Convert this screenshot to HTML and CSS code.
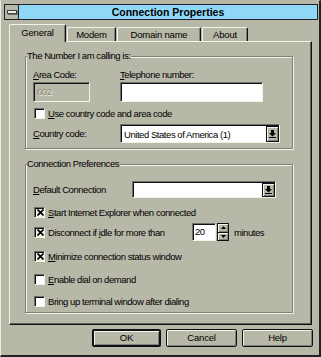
FILE: index.html
```html
<!DOCTYPE html>
<html>
<head>
<meta charset="utf-8">
<link rel="stylesheet" href="styles.css">
</head>
<body>
<div class="window">
  <div class="titlebar">
    <div class="sysmenu"><span class="sysbar"></span></div>
    <div class="caption">Connection Properties</div>
  </div>
  <div class="tabs">
    <div class="tab tab-general active">General</div>
    <div class="tab tab-modem">Modem</div>
    <div class="tab tab-domain">Domain name</div>
    <div class="tab tab-about">About</div>
  </div>
  <div class="panel">
    <div class="group group-number">
      <div class="group-title">The Number I am calling is:</div>
      <div class="fields">
        <div class="field field-area">
          <div class="label"><u>A</u>rea Code:</div>
          <div class="input input-area disabled">602</div>
        </div>
        <div class="field field-phone">
          <div class="label"><u>T</u>elephone number:</div>
          <div class="input input-phone"></div>
        </div>
      </div>
      <div class="check row-usecc"><span class="box"></span><span><u>U</u>se country code and area code</span></div>
      <div class="row row-country">
        <span class="row-label"><u>C</u>ountry code:</span>
        <div class="combo combo-country">
          <span class="combo-text">United States of America (1)</span>
          <span class="drop"><svg width="7" height="8" viewBox="0 0 7 8"><path d="M2 0h3v3h2L3.5 6.5 0 3h2z" fill="#000"/><rect x="0" y="7" width="7" height="1" fill="#000"/></svg></span>
        </div>
      </div>
    </div>
    <div class="group group-prefs">
      <div class="group-title">Connection Preferences</div>
      <div class="row row-default">
        <span class="row-label row-label-wide"><u>D</u>efault Connection</span>
        <div class="combo combo-default">
          <span class="combo-text"></span>
          <span class="drop"><svg width="7" height="8" viewBox="0 0 7 8"><path d="M2 0h3v3h2L3.5 6.5 0 3h2z" fill="#000"/><rect x="0" y="7" width="7" height="1" fill="#000"/></svg></span>
        </div>
      </div>
      <div class="check row-p1"><span class="box checked"><svg width="7" height="7" viewBox="0 0 7 7"><path d="M0.5 0.5L6.5 6.5M6.5 0.5L0.5 6.5" stroke="#000" stroke-width="1.6"/></svg></span><span><u>S</u>tart Internet Explorer when connected</span></div>
      <div class="check row-p2">
        <span class="box checked"><svg width="7" height="7" viewBox="0 0 7 7"><path d="M0.5 0.5L6.5 6.5M6.5 0.5L0.5 6.5" stroke="#000" stroke-width="1.6"/></svg></span>
        <span class="spin-label">Disconnect if <u>i</u>dle for more than</span>
        <span class="input spin-input">20</span>
        <span class="spinner">
          <span class="spin-btn"><svg width="5" height="3" viewBox="0 0 5 3"><path d="M0 3L2.5 0 5 3z" fill="#000"/></svg></span>
          <span class="spin-btn"><svg width="5" height="3" viewBox="0 0 5 3"><path d="M0 0L2.5 3 5 0z" fill="#000"/></svg></span>
        </span>
        <span class="minutes">minutes</span>
      </div>
      <div class="check row-p3"><span class="box checked"><svg width="7" height="7" viewBox="0 0 7 7"><path d="M0.5 0.5L6.5 6.5M6.5 0.5L0.5 6.5" stroke="#000" stroke-width="1.6"/></svg></span><span><u>M</u>inimize connection status window</span></div>
      <div class="check row-p4"><span class="box"></span><span><u>E</u>nable dial on demand</span></div>
      <div class="check row-p5"><span class="box"></span><span>Bring up terminal window after dialing</span></div>
    </div>
  </div>
  <div class="buttons">
    <div class="btn btn-default btn-ok">OK</div>
    <div class="btn btn-cancel">Cancel</div>
    <div class="btn btn-help">Help</div>
  </div>
</div>
</body>
</html>
```
FILE: styles.css
```css
* { box-sizing: border-box; }
html, body { margin: 0; padding: 0; }
body {
  width: 321px;
  height: 357px;
  overflow: hidden;
  font-family: "Liberation Sans", Arial, sans-serif;
  font-size: 9.5px;
  letter-spacing: -0.45px;
  color: #000;
  background: #b8b8a8;
}
u { text-decoration: underline; text-underline-offset: 1px; }

.window {
  width: 321px;
  height: 357px;
  background: #b8b8a8;
  border-top: 1px solid #b8b8a8;
  border-left: 1px solid #ececdc;
  border-right: 2px solid #202028;
  border-bottom: 2px solid #202028;
  padding: 3px 1px 0 3px;
  display: flex;
  flex-direction: column;
}

/* title bar */
.titlebar { display: flex; height: 16px; }
.sysmenu {
  width: 15px;
  background: #b8b8a8;
  border: 1px solid #202028;
  display: flex;
  align-items: center;
  justify-content: center;
}
.sysbar {
  width: 10px;
  height: 4px;
  background: #f0f0e0;
  border: 1px solid #404048;
  box-shadow: 1px 1px 0 #707068;
}
.caption {
  flex: 1;
  background: #90d8f8;
  border: 1px solid #202028;
  border-left: none;
  text-align: center;
  font-weight: bold;
  font-size: 10.5px;
  letter-spacing: 0;
  line-height: 14px;
}

/* tabs */
.tabs {
  display: flex;
  align-items: flex-end;
  gap: 1px;
  height: 17px;
  margin: 4px 0 0 5px;
}
.tab {
  height: 14px;
  background: #b8b8a8;
  border-top: 1px solid #f4f4e4;
  border-left: 1px solid #f4f4e4;
  border-right: 1px solid #101018;
  box-shadow: inset -1px 0 0 #808078;
  border-radius: 2px 2px 0 0;
  text-align: center;
  line-height: 13px;
  letter-spacing: -0.2px;
}
.tab.active {
  height: 18px;
  margin-bottom: -1px;
  position: relative;
  z-index: 1;
  line-height: 15px;
}
.tab-general { width: 57px; }
.tab-modem { width: 49px; }
.tab-domain { width: 84px; }
.tab-about { width: 46px; }

/* panel */
.panel {
  height: 284px;
  margin: 0 6px 0 5px;
  border-top: 1px solid #f4f4e4;
  border-left: 1px solid #f4f4e4;
  border-right: 1px solid #101018;
  border-bottom: 1px solid #101018;
  box-shadow: inset -1px -1px 0 #606058;
  padding: 14px 18px 0 15px;
  display: flex;
  flex-direction: column;
}

.group {
  border: 1px solid #808078;
  box-shadow: inset 1px 1px 0 #f4f4e4, 1px 1px 0 #f4f4e4;
  padding: 0 0 0 7px;
  display: flex;
  flex-direction: column;
}
.group-number { padding-bottom: 5px; }
.group-prefs { margin-top: 15px; padding-bottom: 4px; }
.group-title {
  align-self: flex-start;
  margin: -7px 0 0 -6px;
  padding: 0 1px 0 0;
  background: #b8b8a8;
  line-height: 12px;
}

/* fields */
.fields { display: flex; margin-top: 7px; }
.field { display: flex; flex-direction: column; }
.field-area { width: 87px; }
.label { line-height: 11px; }
.input {
  background: #fff;
  border: 1px solid;
  border-color: #707068 #f4f4e4 #f4f4e4 #707068;
  box-shadow: inset 1px 1px 0 #101018;
  padding: 0 3px;
}
.input-area, .input-phone { height: 20px; margin-top: 2px; line-height: 18px; }
.input-area { width: 57px; }
.input-phone { width: 143px; }
.input.disabled {
  background: #b8b8a8;
  color: #8a8a7c;
  text-shadow: 1px 1px 0 #e8e8d8;
}

.check { display: flex; align-items: center; height: 14px; }
.box {
  width: 11px;
  height: 11px;
  margin: 0 3px 0 1px;
  background: #fff;
  border: 1px solid;
  border-color: #707068 #f4f4e4 #f4f4e4 #707068;
  box-shadow: inset 1px 1px 0 #101018;
  display: flex;
  align-items: center;
  justify-content: center;
  padding: 1px 0 0 1px;
}
.box.checked { background: #f0f0e4; }
.row-usecc { margin-top: 5px; height: 12px; }

.row { display: flex; align-items: center; }
.row-label { width: 87px; }
.row-label-wide { width: 99px; }
.row-country { margin-top: 5px; }
.row-default { margin-top: 11px; }

.combo {
  display: flex;
  background: #fff;
  border: 1px solid;
  border-color: #707068 #f4f4e4 #f4f4e4 #707068;
  box-shadow: inset 1px 1px 0 #101018;
  padding: 1px 0 0 1px;
}
.combo-country { width: 160px; height: 19px; }
.combo-default { width: 144px; height: 17px; }
.combo-text { flex: 1; padding-left: 2px; display: flex; align-items: center; }
.drop {
  width: 13px;
  background: #b8b8a8;
  border: 1px solid #101018;
  box-shadow: inset 1px 1px 0 #f4f4e4, inset -1px -1px 0 #808078;
  display: flex;
  align-items: center;
  justify-content: center;
}

.row-p1 { margin-top: 7px; }
.row-p2 { margin-top: 4px; height: 18px; }
.row-p3 { margin-top: 8px; }
.row-p4 { margin-top: 9px; }
.row-p5 { margin-top: 8px; }

.spin-label { width: 144px; }
.spin-input { width: 24px; height: 18px; line-height: 16px; padding-left: 2px; }
.spinner { width: 12px; height: 18px; margin: 0 5px 0 1px; display: flex; flex-direction: column; }
.spin-btn {
  flex: 1;
  background: #b8b8a8;
  border: 1px solid #101018;
  box-shadow: inset 1px 1px 0 #f4f4e4, inset -1px -1px 0 #808078;
  display: flex;
  align-items: center;
  justify-content: center;
}
.spin-btn + .spin-btn { border-top: none; }

/* buttons */
.buttons {
  display: flex;
  justify-content: flex-end;
  gap: 5px;
  margin: 4px 5px 0 0;
}
.btn {
  height: 18px;
  background: #b8b8a8;
  border: 1px solid #101018;
  border-radius: 2px;
  box-shadow: inset 1px 1px 0 #f4f4e4, inset -1px -1px 0 #808078;
  text-align: center;
  line-height: 16px;
  letter-spacing: -0.2px;
}
.btn-default { border-width: 2px; line-height: 14px; }
.btn-ok { width: 69px; }
.btn-cancel { width: 71px; }
.btn-help { width: 71px; }
```
